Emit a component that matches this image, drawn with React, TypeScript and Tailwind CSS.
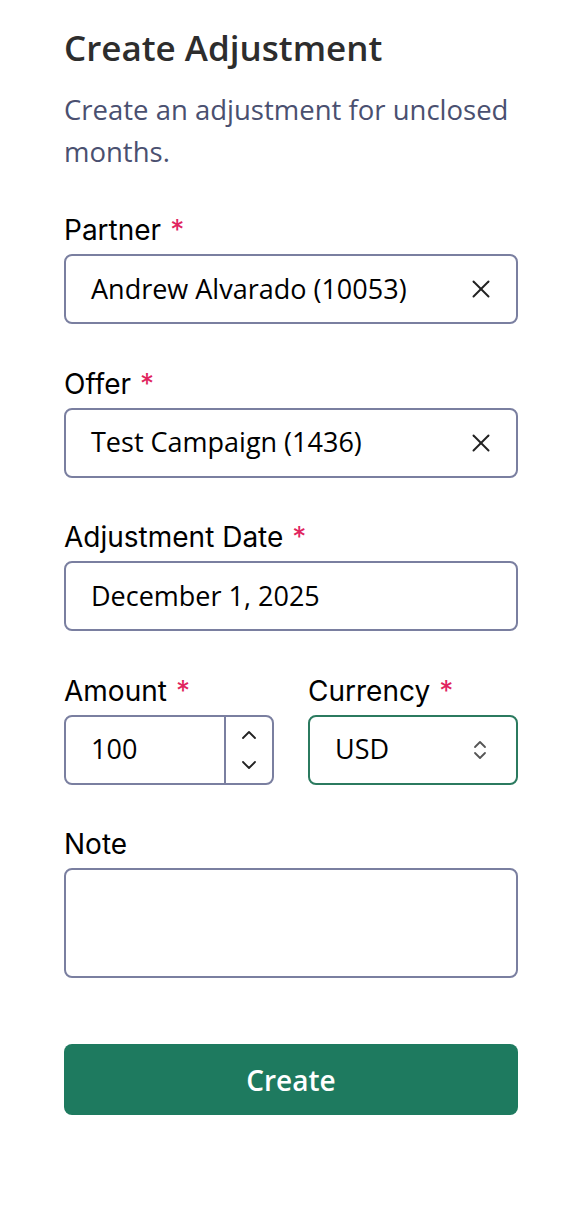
import { X, ChevronUp, ChevronDown, ChevronsUpDown } from "lucide-react";

const ubuntu = "font-['Open_Sans','Noto_Sans',sans-serif]";
const labelFont = "font-['Inter',sans-serif]";

function Label({ text, required }: { text: string; required?: boolean }) {
  return (
    <div className={`${labelFont} text-[28px] leading-[36px] text-black`}>
      {text}
      {required && <span className="ml-[9px] text-[#e0245e]">*</span>}
    </div>
  );
}

function Field({ label, value, clearable }: { label: string; value: string; clearable?: boolean }) {
  return (
    <div className="flex flex-col gap-[6px]">
      <Label text={label} required />
      <div className="flex h-[70px] items-center justify-between rounded-[8px] border-2 border-[#7a7fa0] bg-white pl-[25px] pr-[20px]">
        <span className={`${ubuntu} text-[27px] text-black`}>{value}</span>
        {clearable && <X className="h-[30px] w-[30px] text-[#222]" strokeWidth={1.6} />}
      </div>
    </div>
  );
}

export default function App() {
  return (
    <div className="min-h-[1212px] bg-white pl-16 pr-12 pt-[27px]">
      <h1 className={`${ubuntu} text-[35px] font-semibold leading-[42px] text-[#2d2d2d]`}>
        Create Adjustment
      </h1>
      <p className={`${ubuntu} mt-[20px] text-[27.5px] leading-[42px] text-[#4a5070]`}>
        Create an adjustment for unclosed months.
      </p>

      <div className="mt-[39px] flex flex-col gap-[41.5px]">
        <Field label="Partner" value="Andrew Alvarado (10053)" clearable />
        <Field label="Offer" value="Test Campaign (1436)" clearable />
        <Field label="Adjustment Date" value="December 1, 2025" />

        <div className="grid grid-cols-2 gap-[34px]">
          <div className="flex flex-col gap-[6px]">
            <Label text="Amount" required />
            <div className="flex h-[70px] overflow-hidden rounded-[8px] border-2 border-[#7a7fa0]">
              <div className={`${ubuntu} flex flex-1 items-center pl-[25px] text-[27px] text-black`}>100</div>
              <div className="flex w-[48px] flex-col items-center justify-between border-l-2 border-[#7a7fa0] py-[6px]">
                <ChevronUp className="h-[24px] w-[24px] text-[#222]" strokeWidth={1.8} />
                <ChevronDown className="h-[24px] w-[24px] text-[#222]" strokeWidth={1.8} />
              </div>
            </div>
          </div>
          <div className="flex flex-col gap-[6px]">
            <Label text="Currency" required />
            <div className="flex h-[70px] items-center justify-between rounded-[8px] border-2 border-[#2b7a5f] pl-[25px] pr-[24px]">
              <span className={`${ubuntu} text-[27px] text-black`}>USD</span>
              <ChevronsUpDown className="h-[24px] w-[24px] text-[#555]" strokeWidth={1.8} />
            </div>
          </div>
        </div>

        <div className="flex flex-col gap-[6px]">
          <Label text="Note" />
          <div className="h-[110px] rounded-[8px] border-2 border-[#7a7fa0]" />
        </div>
      </div>

      <button
        type="button"
        className={`${ubuntu} mt-[66px] flex h-[71px] w-full items-center justify-center rounded-[8px] bg-[#1e7a5f] text-[28px] font-semibold text-white`}
      >
        Create
      </button>
    </div>
  );
}
